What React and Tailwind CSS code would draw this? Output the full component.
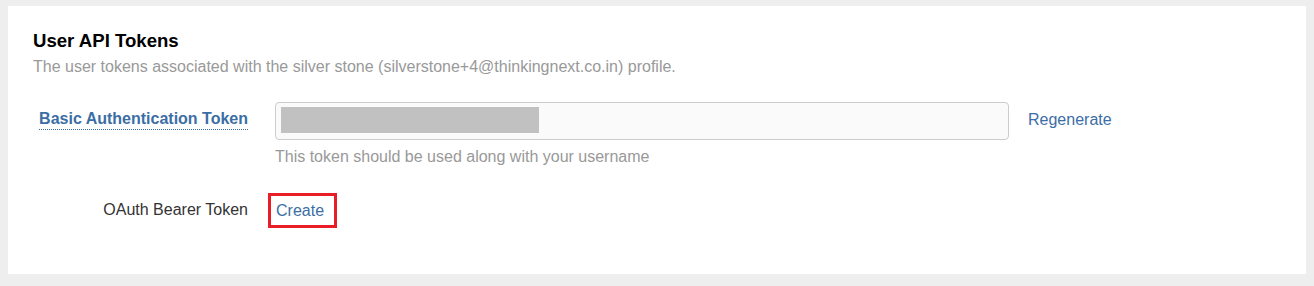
import React from 'react';

// Panneau des jetons API de l'utilisateur
const TokenRow = ({ label, labelClass, children }) => (
  <div className="flex items-start">
    <div className="w-[215px] shrink-0 text-right">
      <span className={labelClass}>{label}</span>
    </div>
    <div className="ml-[27px] flex-1">{children}</div>
  </div>
);

const App = () => {
  return (
    <div
      className="min-h-[286px] bg-[#eeeeee] px-[8px] pt-[6px] pb-[12px]"
      style={{ fontFamily: '"Liberation Sans", Arial, sans-serif' }}
    >
      <div className="h-[268px] bg-white pl-[25px] pr-[20px] pt-[24px]">
        <h2 className="text-[18.6px] leading-[22px] font-bold text-black">User API Tokens</h2>
        <p className="mt-[5px] text-[16px] leading-[20px] text-[#999999]">
          The user tokens associated with the silver stone (silverstone+4@thinkingnext.co.in) profile.
        </p>

        <div className="mt-[25px]">
          <TokenRow
            label="Basic Authentication Token"
            labelClass="inline-block mt-[7px] text-[16px] leading-[20px] font-bold text-[#3b6ea5] border-b border-dotted border-[#3b6ea5]"
          >
            <div className="flex items-start">
              <div className="w-[734px] h-[38px] rounded-[4px] border border-[#cccccc] bg-[#fafafa] px-[5px] py-[4px]">
                <div className="w-[258px] h-[26px] bg-[#c1c1c1]" />
              </div>
              <a href="#" className="ml-[19px] mt-[8px] text-[16px] leading-[20px] text-[#3b6ea5]">
                Regenerate
              </a>
            </div>
            <p className="mt-[7px] text-[16px] leading-[20px] text-[#999999]">
              This token should be used along with your username
            </p>
          </TokenRow>

          <div className="mt-[26px]">
            <TokenRow label="OAuth Bearer Token" labelClass="inline-block mt-[7px] text-[16px] leading-[20px] text-[#333333]">
              <div className="ml-[-7px] inline-block border-[3px] border-[#e81d25] pl-[5px] pr-[10px] pt-[5px] pb-[4px]">
                <a href="#" className="block text-[16px] leading-[20px] text-[#3b6ea5]">
                  Create
                </a>
              </div>
            </TokenRow>
          </div>
        </div>
      </div>
    </div>
  );
};

export default App;
